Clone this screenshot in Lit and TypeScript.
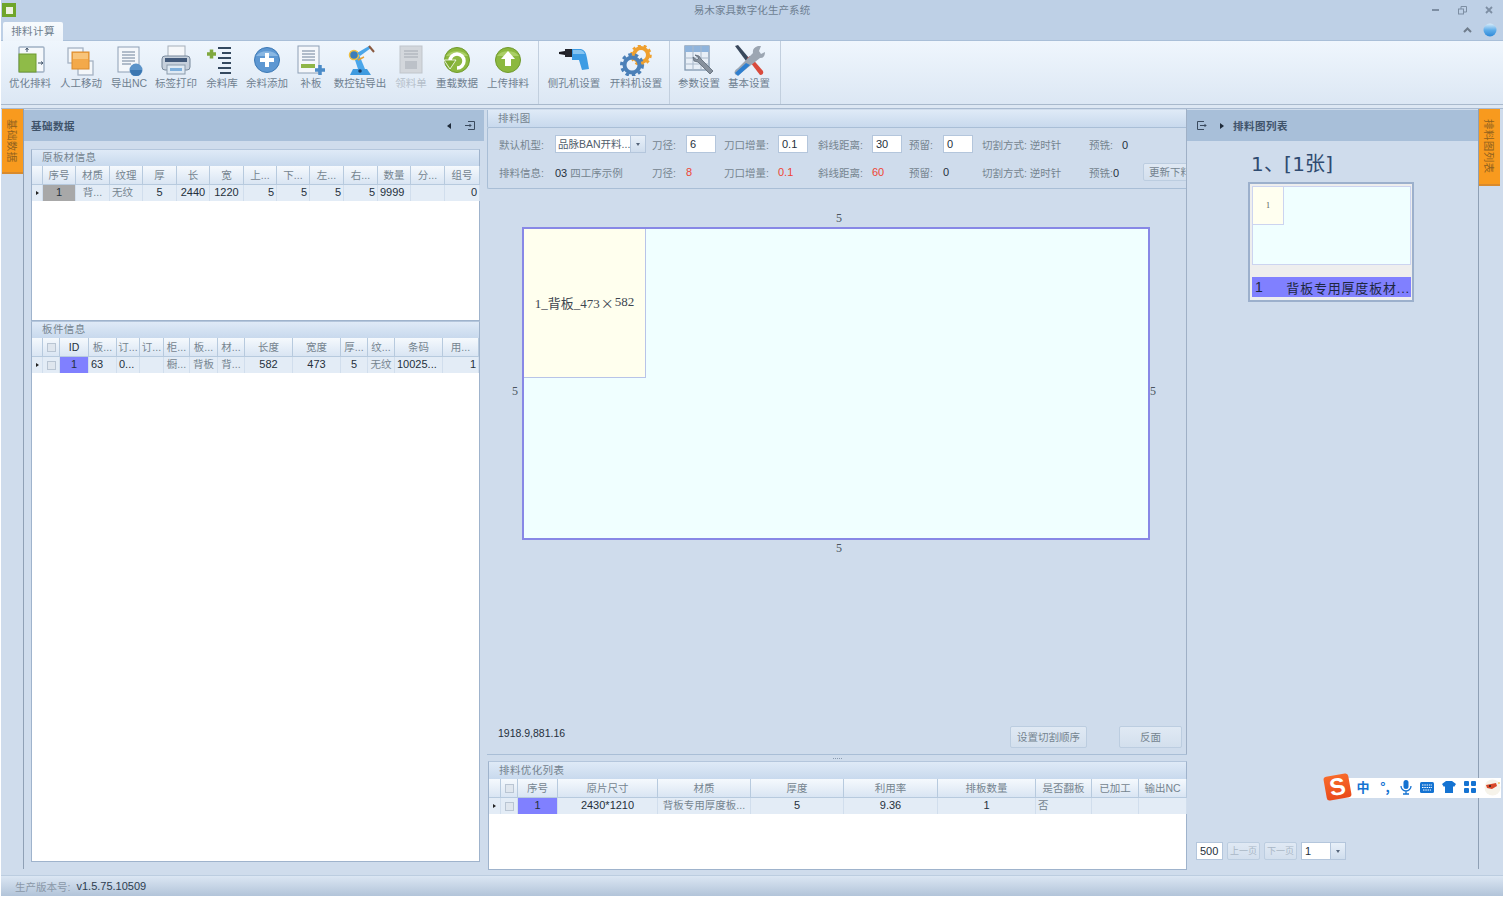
import { LitElement, html, css, svg } from 'lit';
import { customElement } from 'lit/decorators.js';

const doc = (fill: string, line: string) => svg`<rect x="5" y="2" width="21" height="25" fill="${fill}" stroke="#8d9fb5"/><path d="M9 7h13M9 10h13M9 13h13M9 16h13M9 19h9" stroke="${line}" stroke-width="1.4"/>`;

const icons: Record<string, unknown> = {
  opt: svg`<rect x="5" y="2" width="25" height="25" rx="1" fill="#f5f8fb" stroke="#9fb0c4" stroke-width="1.4"/><rect x="5" y="9" width="17" height="18" fill="#8fbb48" stroke="#6f9a30"/><path d="M13 7V3M11.5 5 13 3l1.500 2M24 18h5M27 16.500 29 18l-2 1.500" stroke="#43566c" fill="none"/>`,
  move: svg`<rect x="3" y="3" width="15" height="15" fill="#f4f7fa" stroke="#a5b3c4" stroke-width="1.300"/><rect x="13" y="16" width="15" height="14" fill="#f4f7fa" stroke="#a5b3c4" stroke-width="1.300"/><rect x="7" y="7" width="17" height="17" fill="#f3a94a" stroke="#d98a2c"/><rect x="8" y="8" width="15" height="6" fill="#f8c47a"/>`,
  nc: svg`${doc('#f4f7fb', '#9aa9bb')}<circle cx="23" cy="25" r="6.500" fill="#5b93c9"/><path d="M17 25a6 6 0 0 0 12 0z" fill="#3a76b1"/>`,
  print: svg`<rect x="8" y="1" width="17" height="13" fill="#f5f7f9" stroke="#a5afba"/><rect x="2" y="11" width="28" height="14" rx="3" fill="#c6d0dc" stroke="#76879a"/><rect x="5" y="13" width="22" height="4" fill="#435a7a"/><rect x="7" y="20" width="18" height="9" fill="#dfeaf4" stroke="#8b9bac"/><rect x="10" y="23" width="12" height="3" fill="#7fb0dc"/>`,
  stock: svg`<path d="M1 9h9M5.500 4.500v9" stroke="#7fa83e" stroke-width="3.500"/><path d="M12 3h13M16 8h9M12 13h13M16 18h9M12 23h13" stroke="#34495f" stroke-width="2"/><path d="M14 28h11" stroke="#34495f" stroke-width="2"/>`,
  add: svg`<circle cx="16" cy="15" r="12.500" fill="#5d97d2" stroke="#3c78b4"/><path d="M5 11a12 8 0 0 1 22 0z" fill="#9cc4ea" opacity=".7"/><path d="M16 8v14M9 15h14" stroke="#fff" stroke-width="4"/>`,
  patch: svg`<rect x="3" y="1" width="21" height="27" fill="#f4f7fb" stroke="#8d9fb5"/><path d="M7 6h13M7 9h13M7 12h13M7 15h13" stroke="#9aa9bb" stroke-width="1.300"/><rect x="6" y="19" width="14" height="4" fill="#8fb648"/><path d="M25 20v10M20 25h10" stroke="#4a8bc8" stroke-width="3.500"/>`,
  robot: svg`<path d="M6 30l3-6h14l4 6z" fill="#3f9be0"/><path d="M9 9l5 15h7L14 7z" fill="#4aa6ea"/><circle cx="10" cy="10" r="4.500" fill="#3a7dbb" stroke="#f0c040" stroke-width="1.500"/><path d="M13 8l12-7 2 2-11 8z" fill="#4aa6ea"/><path d="M25 1l5 6" stroke="#8a5a40" stroke-width="2"/><circle cx="16" cy="26" r="1.800" fill="#1b3f66"/><path d="M14 15l6-3" stroke="#e8a030" stroke-width="1.500"/>`,
  pick: svg`<rect x="5" y="1" width="22" height="27" fill="#d3d7dc" stroke="#c0c5cb"/><path d="M9 6h14M9 9h14M9 12h14" stroke="#b4b9c0" stroke-width="1.300"/><rect x="10" y="16" width="12" height="8" fill="#bcc1c8"/>`,
  reload: svg`<circle cx="16" cy="15" r="12.500" fill="#8cb83f" stroke="#6f9a2c"/><path d="M5 11a12 8 0 0 1 22 0z" fill="#b8d878" opacity=".7"/><path d="M9 16a7 7 0 1 1 7 7" fill="none" stroke="#fff" stroke-width="3.500"/><path d="M3 15h12l-6 9z" fill="#7eab32" stroke="#fff" stroke-width=".8"/>`,
  up: svg`<circle cx="16" cy="15" r="12.500" fill="#8cb83f" stroke="#6f9a2c"/><path d="M5 11a12 8 0 0 1 22 0z" fill="#b8d878" opacity=".7"/><path d="M16 6l7 8h-4v7h-6v-7H9z" fill="#fff"/>`,
  drill: svg`<path d="M1 7l6-1v4l-6-1z" fill="#1c1c22"/><rect x="7" y="4" width="7" height="8" fill="#25262c"/><path d="M14 4h9q5 1 6 9l2 11-7 1-3-10h-7z" fill="#3d9ce4"/><path d="M15 5h8q3 1 4 4H15z" fill="#86c4f0"/>`,
  gears: svg`<circle cx="21" cy="10" r="7" fill="none" stroke="#efa02e" stroke-width="4"/><circle cx="21" cy="10" r="9.500" fill="none" stroke="#efa02e" stroke-width="2.500" stroke-dasharray="3 2.900"/><circle cx="12" cy="20" r="7.500" fill="none" stroke="#4b80b8" stroke-width="4"/><circle cx="12" cy="20" r="10.500" fill="none" stroke="#4b80b8" stroke-width="3" stroke-dasharray="3.500 3"/>`,
  params: svg`<rect x="2" y="1" width="24" height="24" fill="#e8eff7" stroke="#8297b0" stroke-width="1.300"/><rect x="2" y="1" width="24" height="6" fill="#8fb4dc"/><path d="M2 13h24M2 19h24M10 1v24M18 1v24" stroke="#aab9ca"/><path d="M12 10l4 1 2 3 12 12-3 3-12-12-4-1-1-4 4 3 2-2z" fill="#87919d" stroke="#5d6875" stroke-width=".8"/>`,
  tools: svg`<path d="M2 1l3-1 11 13-3 3z" fill="#39485c"/><path d="M14 13l3-2 13 15q1 4-3 4z" fill="#d94a3c"/><path d="M28 1l-2 5 2 3 4-2q0 6-5 6L8 28q-4 4-6 1-2-3 3-6L20 8q-1-5 5-7z" fill="#9ca6b2"/><path d="M13 18L2 28l3 3 12-11z" fill="#2d7fd0"/>`,
};

type Tool = { id: string; label: string; w: number; off?: boolean };
// a number in this list is a separator, the value is its left margin
const tools: (Tool | number)[] = [
  { id: 'opt', label: '优化排料', w: 48 },
  { id: 'move', label: '人工移动', w: 54 },
  { id: 'nc', label: '导出NC', w: 42 },
  { id: 'print', label: '标签打印', w: 52 },
  { id: 'stock', label: '余料库', w: 40 },
  { id: 'add', label: '余料添加', w: 50 },
  { id: 'patch', label: '补板', w: 38 },
  { id: 'robot', label: '数控钻导出', w: 60 },
  { id: 'pick', label: '领料单', w: 42, off: true },
  { id: 'reload', label: '重载数据', w: 50 },
  { id: 'up', label: '上传排料', w: 52 },
  4,
  { id: 'drill', label: '侧孔机设置', w: 62 },
  { id: 'gears', label: '开料机设置', w: 62 },
  2,
  { id: 'params', label: '参数设置', w: 50 },
  { id: 'tools', label: '基本设置', w: 50 },
  6,
];

type Col = { w: number; head: string; val?: string; align?: string; sel?: string; kind?: string };

const baseCols: Col[] = [
  { w: 11, head: '', kind: 'ind' },
  { w: 33, head: '序号', val: '1', align: 'c', sel: 'grey' },
  { w: 34, head: '材质', val: '背...', align: 'c' },
  { w: 33, head: '纹理', val: '无纹' },
  { w: 34, head: '厚', val: '5', align: 'c' },
  { w: 33, head: '长', val: '2440', align: 'c' },
  { w: 34, head: '宽', val: '1220', align: 'c' },
  { w: 33, head: '上...', val: '5', align: 'r' },
  { w: 33, head: '下...', val: '5', align: 'r' },
  { w: 34, head: '左...', val: '5', align: 'r' },
  { w: 34, head: '右...', val: '5', align: 'r' },
  { w: 33, head: '数量', val: '9999' },
  { w: 34, head: '分...', val: '' },
  { w: 35, head: '组号', val: '0', align: 'r' },
];

const partCols: Col[] = [
  { w: 11, head: '', kind: 'ind' },
  { w: 17, head: '', kind: 'chk' },
  { w: 29, head: 'ID', val: '1', align: 'c', sel: 'blue' },
  { w: 28, head: '板...', val: '63' },
  { w: 23, head: '订...', val: '0...' },
  { w: 24, head: '订...', val: '' },
  { w: 26, head: '柜...', val: '橱...', align: 'c' },
  { w: 28, head: '板...', val: '背板', align: 'c' },
  { w: 27, head: '材...', val: '背...', align: 'c' },
  { w: 48, head: '长度', val: '582', align: 'c' },
  { w: 48, head: '宽度', val: '473', align: 'c' },
  { w: 27, head: '厚...', val: '5', align: 'c' },
  { w: 27, head: '纹...', val: '无纹', align: 'c' },
  { w: 48, head: '条码', val: '10025...' },
  { w: 36, head: '用...', val: '1', align: 'r' },
];

const optCols: Col[] = [
  { w: 12, head: '', kind: 'ind' },
  { w: 17, head: '', kind: 'chk' },
  { w: 40, head: '序号', val: '1', align: 'c', sel: 'blue' },
  { w: 100, head: '原片尺寸', val: '2430*1210', align: 'c' },
  { w: 93, head: '材质', val: '背板专用厚度板...', align: 'c' },
  { w: 93, head: '厚度', val: '5', align: 'c' },
  { w: 94, head: '利用率', val: '9.36', align: 'c' },
  { w: 98, head: '排板数量', val: '1', align: 'c' },
  { w: 56, head: '是否翻板', val: '否' },
  { w: 47, head: '已加工', val: '' },
  { w: 48, head: '输出NC', val: '' },
];

const isZh = (s: string) => /[^\x00-\x7f]/.test(s);

@customElement('app-root')
export class AppRoot extends LitElement {
  static styles = css`
    :host {
      display: block;
      width: 1504px;
      height: 898px;
      background: #fff;
      font-family: "Liberation Sans", "Noto Sans CJK SC", sans-serif;
      font-size: 10.500px;
      color: #75848f;
    }
    .app {
      width: 1502px;
      height: 896px;
      margin-left: 1px;
      background: #cfdcec;
      display: flex;
      flex-direction: column;
      overflow: hidden;
      position: relative;
    }
    .title {
      height: 20px;
      background: #bed0e6;
      display: grid;
      grid-template-columns: 1fr auto 1fr;
      align-items: center;
    }
    .logo { margin-left: 1px; width: 14px; height: 14px; background: #6fa52a; display: flex; align-items: center; justify-content: center; }
    .logo i { width: 7px; height: 7px; background: #eef3e0; display: block; }
    .title-text { letter-spacing: .1px; line-height: 16px; color: #6e7f92; }
    .win { justify-self: end; display: flex; align-items: center; gap: 18px; padding-right: 10px; }
    .win svg { display: block; }
    .tabs {
      height: 21px;
      background: #bed0e6;
      display: flex;
      align-items: flex-end;
      justify-content: space-between;
      border-bottom: 1px solid #a9bfd8;
      box-sizing: border-box;
      padding-left: 2px;
    }
    .tab {
      width: 60px;
      height: 19px;
      margin-bottom: -1px;
      box-sizing: border-box;
      background: linear-gradient(#f7fafd, #edf4fb);
      border-radius: 2px 2px 0 0;
      text-align: center;
      line-height: 19px;
      letter-spacing: .4px;
      color: #6e7d8c;
    }
    .tab-right { display: flex; align-items: center; gap: 11px; padding: 0 6px 3px 0; }
    .ribbon {
      height: 64px;
      box-sizing: border-box;
      display: flex;
      padding-left: 5px;
      background: linear-gradient(#eff6fd, #dce7f4);
      border-bottom: 1px solid #a9b9cc;
    }
    .tool { display: flex; flex-direction: column; align-items: center; padding-top: 4px; }
    .tool svg { display: block; }
    .tool span { white-space: nowrap; line-height: 15px; color: #6f7f90; }
    .tool.off span { color: #b5bfca; }
    .sep { width: 1px; margin-right: 4px; background: #c2cfde; }
    .gap { height: 4px; background: #dde7f3; border-bottom: 1px solid #a9bad0; box-sizing: border-box; }
    .main {
      flex: 1;
      min-height: 0;
      display: grid;
      grid-template-columns: 23px 460px 3px 700px 291px 25px;
    }
    .vtab {
      writing-mode: vertical-rl;
      text-orientation: sideways;
      background: #f89a1e;
      color: #91621e;
      border-bottom: 2px solid #d98a2c;
      box-sizing: border-box;
      letter-spacing: .4px;
      display: flex;
      align-items: center;
      justify-content: center;
    }
    .rail { border-right: 1px solid #8fa0b5; height: 760px; box-sizing: border-box; }
    .rail .vtab { width: 21px; height: 65px; margin-left: 1px; }
    .rail-r { border-right: 0; border-left: 1px solid #8fa0b5; }
    .rail-r .vtab { height: 77px; margin-left: 0; }
    .panel { display: flex; flex-direction: column; min-height: 0; }
    .panel-head {
      height: 31px;
      margin-top: 1px;
      flex: none;
      background: #a8bfd9;
      display: flex;
      align-items: center;
      padding: 0 9px 0 7px;
      font-weight: 700;
      color: #3f536a;
      letter-spacing: .5px;
    }
    .panel-head .sp { flex: 1; }
    .left-body { padding: 8px 4px 13px 7px; flex: 1; display: flex; flex-direction: column; min-height: 0; }
    .group { border: 1px solid #9fb3cc; border-top-color: #b4c6dc; display: flex; flex-direction: column; background: #fff; }
    .group.one { height: 170px; flex: none; }
    .group.two { flex: 1; min-height: 0; }
    .cap {
      height: 16px;
      line-height: 15px;
      flex: none;
      padding-left: 10px;
      background: linear-gradient(#dfeaf7, #c8d9ed);
      letter-spacing: .4px;
      color: #75848f;
    }
    .grid { display: grid; flex: none; }
    .hd {
      height: 19px;
      line-height: 18px;
      text-align: center;
      white-space: nowrap;
      overflow: hidden;
      background: linear-gradient(#f5f9fd, #d9e5f3);
      border-right: 1px solid #b7cade;
      border-bottom: 1px solid #b7cade;
      box-sizing: border-box;
    }
    .td {
      height: 16px;
      line-height: 15px;
      padding: 0 2px;
      box-sizing: border-box;
      white-space: nowrap;
      overflow: hidden;
      background: #e3ecf6;
      border-right: 1px solid #d1deed;
      color: #25303c;
      font-size: 11px;
    }
    .td.zh { color: #75848f; font-size: 10.500px; }
    .td.c { text-align: center; }
    .td.r { text-align: right; }
    .td.grey { background: #a8a8a8; }
    .td.blue { background: #8080ff; }
    .td.ind { padding: 0; display: flex; align-items: center; justify-content: center; }
    .td.ind i { width: 0; height: 0; border-left: 3px solid #222; border-top: 2.500px solid transparent; border-bottom: 2.500px solid transparent; display: block; }
    .td.chk, .hd.chk { display: flex; align-items: center; justify-content: center; padding: 0; }
    .box { width: 7px; height: 7px; border: 1px solid #b9c5d3; background: #dfe6ee; display: block; }
    .center { display: flex; flex-direction: column; min-height: 0; }
    .stage { height: 645px; flex: none; display: flex; flex-direction: column; border-right: 1px solid #9fb0c6; box-sizing: border-box; }
    .center-cap { height: 17px; line-height: 16px; margin-top: 1px; border-left: 1px solid #a9bed6; }
    .opts {
      display: grid;
      grid-template-columns: 56px 97px 34px 38px 54px 40px 54px 37px 34px 39px 107px 54px 1fr;
      grid-template-rows: 28px 28px;
      align-items: center;
      padding: 2px 0 2px 11px;
      border: 1px solid #a9bed6;
      border-right: 0;
      border-radius: 2px 0 0 2px;
      overflow: hidden;
      white-space: nowrap;
    }
    .dark { color: #25303c; font-size: 11px; }
    .red { color: #ee4433; font-size: 11px; }
    .input {
      width: 30px;
      height: 18px;
      box-sizing: border-box;
      background: #fff;
      border: 1px solid #b4c6dc;
      color: #25303c;
      font-size: 11px;
      line-height: 16px;
      padding-left: 3px;
    }
    .combo { width: 91px; display: flex; height: 18px; border: 1px solid #b4c6dc; box-sizing: border-box; background: #fff; line-height: 16px; }
    .combo b { flex: 1; font-weight: 400; padding-left: 2px; color: #4f5d6c; overflow: hidden; white-space: nowrap; }
    .arrow { width: 14px; flex: none; background: linear-gradient(#e8f0f9, #cfdded); border-left: 1px solid #b4c6dc; display: flex; align-items: center; justify-content: center; }
    .arrow i { border-top: 3px solid #55657a; border-left: 2.500px solid transparent; border-right: 2.500px solid transparent; display: block; }
    .btn {
      box-sizing: border-box;
      border: 1px solid #bccde0;
      background: linear-gradient(#e0e9f4, #d3dfed);
      border-radius: 2px;
      text-align: center;
      white-space: nowrap;
      color: #75848f;
    }
    .update { width: 60px; height: 18px; line-height: 16px; text-align: left; padding-left: 5px; }
    .canvas { flex: 1; min-height: 0; display: flex; flex-direction: column; justify-content: space-between; }
    .sheet-grid {
      display: grid;
      grid-template-columns: 35px 628px 20px;
      grid-template-rows: 18px 313px 16px;
      margin-top: 20px;
      font-family: "Liberation Serif", "Noto Sans CJK SC", serif;
      font-size: 12px;
      color: #4a5560;
      align-items: center;
    }
    .sheet-grid .t { grid-column: 2; text-align: center; padding-left: 6px; }
    .sheet-grid .l { grid-column: 1; text-align: right; padding: 16px 4px 0 0; }
    .sheet-grid .sheet { grid-column: 2; }
    .sheet-grid .rr { grid-column: 3; margin-left: 0; padding-top: 16px; }
    .sheet { height: 313px; box-sizing: border-box; border: 2px solid #8888e6; background: #f0ffff; }
    .piece {
      width: 122px;
      height: 149px;
      box-sizing: border-box;
      background: #ffffee;
      border-right: 1px solid #b8c4e8;
      border-bottom: 1px solid #b8c4e8;
      display: flex;
      align-items: center;
      justify-content: center;
      color: #3d4650;
      font-size: 13px;
      white-space: nowrap;
      padding-bottom: 2px;
    }
    .times { font-family: "Noto Sans CJK SC", sans-serif; font-size: 13px; padding: 0 1px; }
    .canvas-foot { display: flex; align-items: center; padding: 0 4px 6px 11px; }
    .coord { flex: 1; color: #25303c; font-size: 10.500px; margin-top: -8px; }
    .canvas-foot .btn { height: 22px; line-height: 20px; }
    .splitter { height: 7px; flex: none; display: flex; align-items: center; justify-content: center; border-top: 1px solid #a9bed6; box-sizing: border-box; }
    .splitter i { width: 9px; border-top: 1px dotted #8a9bb0; display: block; }
    .group.bottom { margin-left: 1px; height: 107px; flex: none; }
    .group.bottom .cap { height: 17px; line-height: 16px; }
    .right-head { padding-left: 10px; }
    .right-body { padding: 11px 0 0 64px; flex: 1; display: flex; flex-direction: column; position: relative; }
    .count { font-size: 20px; line-height: 24px; color: #2f4b70; font-family: "DejaVu Sans", "Noto Sans CJK SC", sans-serif; font-weight: 400; letter-spacing: .2px; }
    .thumb {
      margin: 6px 0 0 -3px;
      width: 166px;
      height: 120px;
      box-sizing: border-box;
      border: 2px solid #9cb0cc;
      background: #eeeeee;
      padding: 2px 1px 2px 2px;
    }
    .mini { height: 79px; box-sizing: border-box; border: 1px solid #ccd4f0; background: #f0ffff; }
    .mini div { width: 31px; height: 38px; box-sizing: border-box; background: #fffff0; border-right: 1px solid #ccd4f0; border-bottom: 1px solid #ccd4f0; display: flex; align-items: center; justify-content: center; font: 8px "Liberation Serif", serif; color: #555; }
    .thumb-cap {
      margin-top: 12px;
      height: 20px;
      background: #8080ff;
      color: #1d2740;
      display: flex;
      align-items: center;
      justify-content: space-between;
      padding: 0 1px 0 3px;
      font-size: 13px;
      letter-spacing: .8px;
      white-space: nowrap;
    }
    .thumb-cap em { font-style: normal; font-size: 14px; }
    .pager { margin: auto 0 15px -55px; display: flex; align-items: center; gap: 4px; }
    .pager .input { width: 27px; }
    .pager .btn { width: 33px; height: 18px; line-height: 16px; font-size: 9px; color: #a9b7c6; }
    .page-combo { width: 45px; display: flex; height: 18px; border: 1px solid #b4c6dc; box-sizing: border-box; background: #fff; line-height: 16px; color: #25303c; font-size: 11px; padding-left: 3px; }
    .page-combo span { flex: 1; }
    .status {
      height: 21px;
      flex: none;
      background: linear-gradient(#dbe6f3, #b2c4d9);
      border-top: 1px solid #bccde0;
      box-sizing: border-box;
      display: flex;
      align-items: center;
      padding-left: 14px;
      gap: 3px;
      color: #8a98a8;
    }
    .status b { font-weight: 400; color: #2d3d50; font-size: 11px; }
    .sogou {
      position: absolute;
      left: 1322px;
      top: 772px;
      width: 178px;
      height: 30px;
      display: flex;
      align-items: center;
    }
    .sogou-bar {
      position: absolute;
      left: 22px;
      top: 6px;
      right: 0;
      height: 20px;
      background: #fff;
    }
    .sogou-logo {
      position: relative;
      width: 25px;
      height: 24px;
      background: linear-gradient(#f86a2a, #ea4a1a);
      transform: rotate(-10deg);
      border-radius: 3px;
      margin-left: 2px;
      color: #fff;
      font: 700 24px/24px "Liberation Sans", sans-serif;
      text-align: center;
    }
    .sogou-icons { position: relative; display: flex; align-items: center; margin-left: 6px; gap: 8px; color: #1473d2; }
    .sogou-icons span { font: 700 13px/16px "Noto Sans CJK SC", sans-serif; width: 14px; text-align: center; }
    .sogou-icons svg { display: block; }
  `;

  private renderTool(t: Tool | number) {
    if (typeof t === 'number') return html`<div class="sep" style="margin-left:${t}px"></div>`;
    return html`<div class="tool ${t.off ? 'off' : ''}" style="width:${t.w}px">
      <svg width="32" height="31" viewBox="0 0 32 31">${icons[t.id]}</svg>
      <span>${t.label}</span>
    </div>`;
  }

  private renderGrid(cols: Col[]) {
    const tpl = cols.map((c) => `${c.w}px`).join(' ');
    return html`<div class="grid" style="grid-template-columns:${tpl}">
      ${cols.map((c) => html`<div class="hd ${c.kind === 'chk' ? 'chk' : ''}" style=${c.head === 'ID' ? 'color:#25303c' : ''}>
        ${c.kind === 'chk' ? html`<i class="box"></i>` : c.head}
      </div>`)}
      ${cols.map((c) => {
        if (c.kind === 'ind') return html`<div class="td ind"><i></i></div>`;
        if (c.kind === 'chk') return html`<div class="td chk"><i class="box"></i></div>`;
        const v = c.val ?? '';
        return html`<div class="td ${c.align ?? ''} ${c.sel ?? ''} ${isZh(v) ? 'zh' : ''}">${v}</div>`;
      })}
    </div>`;
  }

  render() {
    return html`<div class="app">
      <div class="title">
        <div class="logo"><i></i></div>
        <div class="title-text">易木家具数字化生产系统</div>
        <div class="win">
          <svg width="8" height="8" viewBox="0 0 8 8"><path d="M0 4h7" stroke="#7d8ea3" stroke-width="2"/></svg>
          <svg width="9" height="9" viewBox="0 0 9 9" fill="none" stroke="#7d8ea3"><rect x=".5" y="3" width="5" height="5"/><path d="M3 3V.5h5.500V6H6"/></svg>
          <svg width="8" height="8" viewBox="0 0 8 8" stroke="#7d8ea3" stroke-width="1.800"><path d="M1 1l6 6M7 1L1 7"/></svg>
        </div>
      </div>
      <div class="tabs">
        <div class="tab">排料计算</div>
        <div class="tab-right">
          <svg width="9" height="7" viewBox="0 0 9 7"><path d="M1 5l3.500-3.500L8 5" fill="none" stroke="#6f7c8c" stroke-width="2"/></svg>
          <svg width="14" height="14" viewBox="0 0 14 14"><defs><linearGradient id="orb" x1="0" y1="0" x2="0" y2="1"><stop offset="0" stop-color="#d8ecfa"/><stop offset=".5" stop-color="#60aeea"/><stop offset="1" stop-color="#2d88d8"/></linearGradient></defs><circle cx="7" cy="7" r="6.500" fill="url(#orb)"/></svg>
        </div>
      </div>
      <div class="ribbon">${tools.map((t) => this.renderTool(t))}</div>
      <div class="gap"></div>
      <div class="main">
        <div class="rail"><div class="vtab">基础数据</div></div>
        <div class="panel">
          <div class="panel-head">
            基础数据<span class="sp"></span>
            <svg width="4" height="6" viewBox="0 0 4 6" style="margin-right:14px"><path d="M4 0v6L0 3z" fill="#1f2b3a"/></svg>
            <svg width="10" height="9" viewBox="0 0 10 9" fill="none" stroke="#3a4a5e"><path d="M3 .5h6.500v8H3M0 4.500h6M4.500 3l1.500 1.500L4.500 6"/></svg>
          </div>
          <div class="left-body">
            <div class="group one">
              <div class="cap">原板材信息</div>
              ${this.renderGrid(baseCols)}
            </div>
            <div class="group two">
              <div class="cap">板件信息</div>
              ${this.renderGrid(partCols)}
            </div>
          </div>
        </div>
        <div></div>
        <div class="center">
          <div class="stage">
            <div class="cap center-cap">排料图</div>
            <div class="opts">
              <span>默认机型:</span>
              <div class="combo"><b>品脉BAN开料...</b><div class="arrow"><i></i></div></div>
              <span>刀径:</span><div class="input">6</div>
              <span>刀口增量:</span><div class="input">0.1</div>
              <span>斜线距离:</span><div class="input">30</div>
              <span>预留:</span><div class="input">0</div>
              <span>切割方式: 逆时针</span>
              <span style="grid-column:span 2">预铣:<span class="dark" style="margin-left:9px">0</span></span>

              <span>排料信息:</span>
              <span><span class="dark">03</span> 四工序示例</span>
              <span>刀径:</span><span class="red">8</span>
              <span>刀口增量:</span><span class="red">0.1</span>
              <span>斜线距离:</span><span class="red">60</span>
              <span>预留:</span><span class="dark">0</span>
              <span>切割方式: 逆时针</span>
              <span>预铣:<span class="dark">0</span></span>
              <div class="btn update">更新下料</div>
            </div>
            <div class="canvas">
              <div class="sheet-grid">
                <div class="t">5</div>
                <div class="l">5</div>
                <div class="sheet"><div class="piece">1_背板_473<span class="times">×</span>582</div></div>
                <div class="rr">5</div>
                <div class="t">5</div>
              </div>
              <div class="canvas-foot">
                <span class="coord">1918.9,881.16</span>
                <div class="btn" style="width:77px;margin-right:32px">设置切割顺序</div>
                <div class="btn" style="width:63px">反面</div>
              </div>
            </div>
          </div>
          <div class="splitter"><i></i></div>
          <div class="group bottom">
            <div class="cap">排料优化列表</div>
            ${this.renderGrid(optCols)}
          </div>
        </div>
        <div class="panel">
          <div class="panel-head right-head">
            <svg width="10" height="9" viewBox="0 0 10 9" fill="none" stroke="#3a4a5e" style="margin-right:13px"><path d="M7 .5H.5v8H7M3 4.500h6M7.500 3L9 4.500 7.500 6"/></svg>
            <svg width="4" height="6" viewBox="0 0 4 6" style="margin-right:9px"><path d="M0 0v6l4-3z" fill="#1f2b3a"/></svg>
            排料图列表
          </div>
          <div class="right-body">
            <div class="count">1、[1张]</div>
            <div class="thumb">
              <div class="mini"><div>1</div></div>
              <div class="thumb-cap"><em>1</em><span>背板专用厚度板材...</span></div>
            </div>
            <div class="pager">
              <div class="input">500</div>
              <div class="btn">上一页</div>
              <div class="btn">下一页</div>
              <div class="page-combo"><span>1</span><div class="arrow"><i></i></div></div>
            </div>
          </div>
        </div>
        <div class="rail rail-r"><div class="vtab">排料图列表</div></div>
      </div>
      <div class="status">生产版本号:<b>&nbsp;v1.5.75.10509</b></div>
      <div class="sogou">
        <div class="sogou-bar"></div>
        <div class="sogou-logo">S</div>
        <div class="sogou-icons">
          <span>中</span>
          <span>°,</span>
          <svg width="12" height="15" viewBox="0 0 12 15" fill="#1473d2"><rect x="3.500" y="0" width="5" height="9" rx="2.500"/><path d="M1 6a5 5 0 0 0 10 0M6 11v3M3 14h6" fill="none" stroke="#1473d2" stroke-width="1.300"/></svg>
          <svg width="14" height="11" viewBox="0 0 14 11"><rect width="14" height="11" rx="1.500" fill="#1473d2"/><path d="M2 3h10M2 5.500h10M3 8h8" stroke="#fff" stroke-dasharray="1.500 .8"/></svg>
          <svg width="14" height="12" viewBox="0 0 14 12"><path d="M4 0h6l4 3-2 3-1-1v7H3V5L2 6 0 3z" fill="#1473d2"/></svg>
          <svg width="12" height="12" viewBox="0 0 12 12" fill="#1473d2"><rect width="5" height="5" rx="1"/><rect x="7" width="5" height="5" rx="1"/><rect y="7" width="5" height="5" rx="1"/><rect x="7" y="7" width="5" height="5" rx="1"/></svg>
          <svg width="17" height="17" viewBox="0 0 17 17"><circle cx="8.500" cy="8.500" r="8" fill="#f6f3ea"/><path d="M2 6l10-2 1 3-5 3-5-1z" fill="#d8482a"/><circle cx="6" cy="7" r="1" fill="#222"/><path d="M15 3l1 1-1 1-1-1z" fill="#f0b020"/></svg>
        </div>
      </div>
    </div>`;
  }
}
